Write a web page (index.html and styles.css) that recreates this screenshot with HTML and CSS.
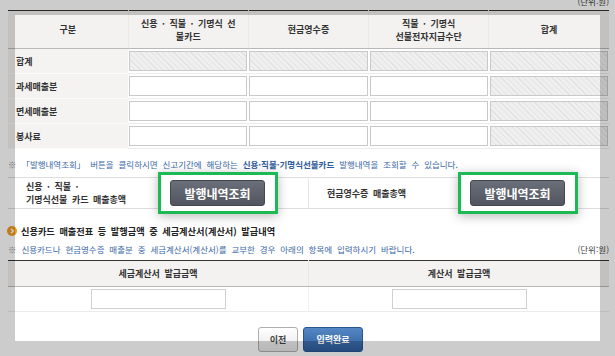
FILE: index.html
```html
<!DOCTYPE html>
<html lang="ko">
<head>
  <meta charset="UTF-8">
  <meta name="viewport" content="width=device-width, initial-scale=1.0">
  <title>신용카드 매출전표 등 발행금액</title>
  <link rel="stylesheet" href="styles.css">
</head>
<body>
  <div class="page">
    <div class="unit unit-top">(단위:원)</div>

    <!-- 매출 집계표 -->
    <table class="grid sales">
      <thead>
        <tr>
          <th>구분</th>
          <th>신용 · 직불 · 기명식 선<br>불카드</th>
          <th>현금영수증</th>
          <th>직불 · 기명식<br>선불전자지급수단</th>
          <th>합계</th>
        </tr>
      </thead>
      <tbody>
        <tr>
          <th class="row-label">합계</th>
          <td><span class="field field-off"></span></td>
          <td><span class="field field-off"></span></td>
          <td><span class="field field-off"></span></td>
          <td><span class="field field-off"></span></td>
        </tr>
        <tr>
          <th class="row-label">과세매출분</th>
          <td><input class="field" type="text"></td>
          <td><input class="field" type="text"></td>
          <td><input class="field" type="text"></td>
          <td><span class="field field-off"></span></td>
        </tr>
        <tr>
          <th class="row-label">면세매출분</th>
          <td><input class="field" type="text"></td>
          <td><input class="field" type="text"></td>
          <td><input class="field" type="text"></td>
          <td><span class="field field-off"></span></td>
        </tr>
        <tr>
          <th class="row-label">봉사료</th>
          <td><input class="field" type="text"></td>
          <td><input class="field" type="text"></td>
          <td><input class="field" type="text"></td>
          <td><span class="field field-off"></span></td>
        </tr>
      </tbody>
    </table>

    <p class="note note-first"><span class="mark">※</span> 「발행내역조회」 버튼을 클릭하시면 신고기간에 해당하는 <b>신용·직불·기명식선불카드</b> 발행내역을 조회할 수 있습니다.</p>

    <!-- 발행내역 조회 -->
    <div class="lookup">
      <div class="lookup-label">신용 · 직불 ·<br>기명식선불 카드 매출총액</div>
      <div class="lookup-cell">
        <span class="spot"><button class="btn-dark" type="button">발행내역조회</button></span>
      </div>
      <div class="lookup-label lookup-split">현금영수증 매출총액</div>
      <div class="lookup-cell">
        <span class="spot"><button class="btn-dark" type="button">발행내역조회</button></span>
      </div>
    </div>

    <h3 class="section-title">
      <svg class="bullet" width="10" height="10" viewBox="0 0 10 10">
        <circle cx="5" cy="5" r="5" fill="#ee9a1e"/>
        <path d="M4 2.8 L6.2 5 L4 7.2" fill="none" stroke="#fff" stroke-width="1.5"/>
      </svg>
      신용카드 매출전표 등 발행금액 중 세금계산서(계산서) 발급내역
    </h3>

    <div class="note-row">
      <p class="note"><span class="mark">※</span> 신용카드나 현금영수증 매출분 중 세금계산서(계산서)를 교부한 경우 아래의 항목에 입력하시기 바랍니다.</p>
      <span class="unit">(단위:원)</span>
    </div>

    <!-- 세금계산서 발급금액 -->
    <table class="grid tax">
      <thead>
        <tr>
          <th>세금계산서 발급금액</th>
          <th>계산서 발급금액</th>
        </tr>
      </thead>
      <tbody>
        <tr>
          <td><input class="field field-mid" type="text"></td>
          <td><input class="field field-mid" type="text"></td>
        </tr>
      </tbody>
    </table>

    <div class="actions">
      <button class="btn-plain" type="button">이전</button>
      <button class="btn-blue" type="button">입력완료</button>
    </div>
  </div>

  <!-- 안내 하이라이트 영역 -->
  <div class="spotlight"></div>
</body>
</html>
```

FILE: styles.css
```css
body {
  margin: 0;
  padding: 0;
  background: #fff;
  color: #333;
  font-family: "Noto Sans CJK KR", sans-serif;
  font-size: 9px;
  overflow: hidden;
}
.page {
  width: 601px;
  padding: 0 6px 0 8px;
  word-spacing: 2px;
}
.unit {
  color: #444;
  font-size: 8.5px;
}
.unit-top {
  height: 14px;
  margin-top: -4px;
  line-height: 11px;
  text-align: right;
}
.grid {
  width: 100%;
  border-collapse: collapse;
  table-layout: fixed;
  border-top: 1px solid #333;
}
.grid thead th {
  background: #f3f2f0;
  border-bottom: 1px solid #b8b8b8;
  border-left: 1px solid #ebe9e6;
  font-weight: bold;
  line-height: 13px;
  text-align: center;
}
.grid thead th:first-child {
  border-left: none;
}
.sales thead th {
  height: 37px;
  padding: 0;
}
.sales td,
.sales .row-label {
  height: 24px;
  padding: 0 1px;
  border-bottom: 1px solid #ececec;
}
.sales .row-label {
  background: #f4f3f1;
  padding-left: 8px;
  text-align: left;
  font-weight: bold;
  border-bottom-color: #fbfbfa;
}
.field {
  display: block;
  box-sizing: border-box;
  width: 100%;
  height: 20px;
  margin: 0;
  padding: 0 4px;
  border: 1px solid #c9c9c9;
  background: #fff;
  font: inherit;
}
.field-off {
  background: repeating-linear-gradient(45deg, #efefef 0, #efefef 3px, #e2e2e2 3px, #e2e2e2 4px);
}
.note {
  margin: 0;
  color: #3a68a6;
  font-size: 8.5px;
  line-height: 12px;
  word-spacing: 2.5px;
}
.note b {
  color: #2d5a98;
}
.note .mark {
  color: #999;
}
.note-first {
  margin: 9px 0 7px;
}
.lookup {
  display: grid;
  grid-template-columns: 150px 150px 150px 151px;
  border-top: 1px solid #dedede;
  border-bottom: 1px solid #dedede;
}
.lookup-label {
  display: flex;
  align-items: center;
  height: 30px;
  padding-left: 18px;
  font-weight: bold;
  line-height: 13px;
}
.lookup-split {
  border-left: 1px solid #e6e6e6;
}
.lookup-cell {
  display: flex;
  align-items: center;
}
.spot {
  position: relative;
  z-index: 2;
  display: inline-block;
  margin: -8px 0;
  padding: 5px 10px 5px 9px;
  border: 3px solid #1db954;
  background: #fff;
  box-shadow: 0 2px 10px rgba(0, 0, 0, 0.28);
}
.btn-dark {
  display: block;
  width: 95px;
  height: 26px;
  padding: 0;
  border: 1px solid #43474f;
  border-radius: 3px;
  background: linear-gradient(#6a6f79, #50555f);
  color: #fff;
  font-family: inherit;
  font-size: 12px;
  font-weight: bold;
  word-spacing: 0;
}
.section-title {
  display: flex;
  align-items: center;
  gap: 4px;
  margin: 15px 0 5px -1px;
  font-size: 9.2px;
  line-height: 14px;
  color: #222;
}
.note-row {
  display: flex;
  justify-content: space-between;
  align-items: center;
  margin-bottom: 5px;
}
.tax thead th {
  height: 25px;
  padding: 0;
}
.tax td {
  height: 24px;
  padding: 0;
  border-bottom: 1px solid #ececec;
}
.tax td + td {
  border-left: 1px solid #f0f0f0;
}
.field-mid {
  width: 135px;
  margin: 0 auto;
  border-color: #d0d0d0;
}
.actions {
  display: flex;
  justify-content: center;
  gap: 5px;
  margin-top: 15px;
  padding-left: 4px;
}
.actions button {
  height: 25px;
  padding: 0;
  border-radius: 3px;
  font-family: inherit;
  font-size: 9px;
  font-weight: bold;
  word-spacing: 0;
}
.btn-plain {
  width: 40px;
  border: 1px solid #aeaeae;
  background: linear-gradient(#fff, #e6e6e6);
  color: #444;
}
.btn-blue {
  width: 60px;
  border: 1px solid #2a5490;
  background: linear-gradient(#5587c4, #2f5e9e);
  color: #fff;
}
.spotlight {
  position: absolute;
  left: 15px;
  top: 15px;
  width: 585px;
  height: 326px;
  box-shadow: 0 0 0 2000px rgba(0, 0, 0, 0.2);
  pointer-events: none;
  z-index: 1;
}
```
